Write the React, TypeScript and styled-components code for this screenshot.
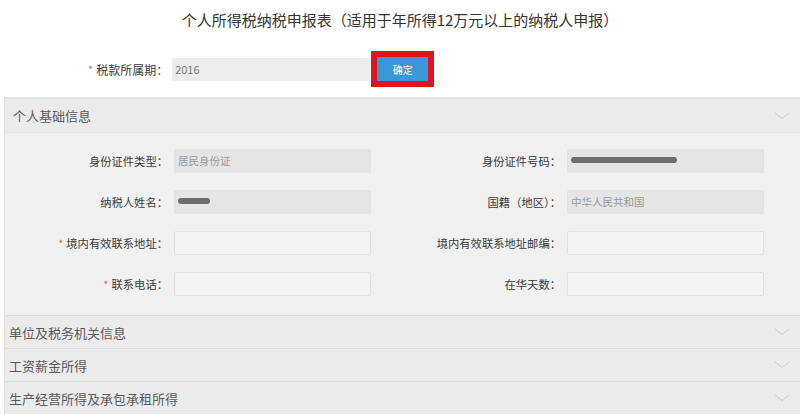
import React from 'react';
import styled, { createGlobalStyle } from 'styled-components';

const GlobalStyle = createGlobalStyle`
  html, body {
    margin: 0;
    padding: 0;
    background: #fff;
  }
  body {
    font-family: "Noto Sans CJK SC", "Noto Sans", sans-serif;
    color: #333;
  }
`;

const Page = styled.div`
  width: 800px;
  height: 415px;
  overflow: hidden;
  background: #fff;
`;

const Title = styled.h1`
  margin: 0;
  padding-top: 10px;
  font-size: 15px;
  line-height: 20px;
  font-weight: 400;
  text-align: center;
  color: #333;
`;

const PeriodRow = styled.div`
  display: flex;
  align-items: center;
  margin-top: 21px;
  padding-left: 88px;
`;

const Star = styled.span`
  color: #e2685f;
  font-size: 11px;
  margin-right: 3px;
`;

const PeriodLabel = styled.span`
  font-size: 12px;
  color: #3a3a3a;
  margin-right: 4px;
`;

const PeriodInput = styled.div`
  width: 198px;
  height: 23px;
  background: #ececec;
  color: #777;
  font-size: 11px;
  line-height: 23px;
  padding-left: 3px;
  box-sizing: border-box;
`;

const Highlight = styled.div`
  border: 6px solid #e0141e;
  margin-left: 1px;
`;

const ConfirmButton = styled.button`
  display: block;
  width: 51px;
  height: 24px;
  border: none;
  padding: 0;
  background: #3a97d8;
  color: #fff;
  font-family: inherit;
  font-size: 10px;
`;

const Panel = styled.div`
  margin-top: 10px;
  margin-left: 4px;
  border-top: 2px solid #e1e1e1;
  border-left: 1px solid #e2e2e2;
`;

const SectionHeader = styled.div<{ $first?: boolean }>`
  display: flex;
  align-items: center;
  justify-content: space-between;
  height: ${(p) => (p.$first ? 33 : 32)}px;
  padding-left: ${(p) => (p.$first ? 8 : 4)}px;
  padding-right: 10px;
  background: #ebebeb;
  border-top: ${(p) => (p.$first ? 'none' : '1px solid #dcdcdc')};
  border-bottom: ${(p) => (p.$first ? '1px solid #e3e3e3' : 'none')};
  font-size: 13px;
  color: #5a5a5a;
`;

const Chevron = styled.svg`
  width: 16px;
  height: 8px;
`;

const SectionBody = styled.div`
  display: grid;
  grid-template-columns: repeat(2, 393px);
  row-gap: 17px;
  padding: 16px 0 19px;
  background: #f1f1f1;
`;

const Field = styled.div`
  display: flex;
  align-items: center;
  height: 24px;
`;

const FieldLabel = styled.div`
  width: 163px;
  text-align: right;
  font-size: 11.3px;
  color: #3a3a3a;
  margin-right: 6px;
  white-space: nowrap;
`;

const FieldInput = styled.div<{ $disabled?: boolean }>`
  position: relative;
  width: 197px;
  height: 24px;
  box-sizing: border-box;
  border: 1px solid ${(p) => (p.$disabled ? '#e3e3e3' : '#e2e2e2')};
  background: ${(p) => (p.$disabled ? '#e5e5e5' : '#f4f4f4')};
  color: #9a9a9a;
  font-size: 10.5px;
  line-height: 22px;
  padding-left: 3px;
  border-radius: 2px;
`;

const Redacted = styled.span<{ $w: number }>`
  position: absolute;
  left: 3px;
  top: 7px;
  width: ${(p) => p.$w}px;
  height: 6px;
  border-radius: 3px;
  background: #6d6d6d;
  filter: blur(0.6px);
`;

const Chev = () => (
  <Chevron viewBox="0 0 16 8">
    <polyline points="1,1 8,6.5 15,1" fill="none" stroke="#c9c9c9" strokeWidth="1" />
  </Chevron>
);

type FieldDef = {
  label: string;
  required?: boolean;
  value?: string;
  disabled?: boolean;
  redact?: number;
};

const fields: FieldDef[] = [
  { label: '身份证件类型：', value: '居民身份证', disabled: true },
  { label: '身份证件号码：', disabled: true, redact: 106 },
  { label: '纳税人姓名：', disabled: true, redact: 32 },
  { label: '国籍（地区）：', value: '中华人民共和国', disabled: true },
  { label: '境内有效联系地址：', required: true },
  { label: '境内有效联系地址邮编：' },
  { label: '联系电话：', required: true },
  { label: '在华天数：' },
];

const collapsed = ['单位及税务机关信息', '工资薪金所得', '生产经营所得及承包承租所得'];

export default function App() {
  return (
    <Page>
      <GlobalStyle />
      <Title>个人所得税纳税申报表（适用于年所得12万元以上的纳税人申报）</Title>
      <PeriodRow>
        <Star>*</Star>
        <PeriodLabel>税款所属期：</PeriodLabel>
        <PeriodInput>2016</PeriodInput>
        <Highlight>
          <ConfirmButton>确定</ConfirmButton>
        </Highlight>
      </PeriodRow>
      <Panel>
        <SectionHeader $first>
          个人基础信息
          <Chev />
        </SectionHeader>
        <SectionBody>
          {fields.map((f) => (
            <Field key={f.label}>
              <FieldLabel>
                {f.required && <Star>*</Star>}
                {f.label}
              </FieldLabel>
              <FieldInput $disabled={f.disabled}>
                {f.value}
                {f.redact && <Redacted $w={f.redact} />}
              </FieldInput>
            </Field>
          ))}
        </SectionBody>
        {collapsed.map((t) => (
          <SectionHeader key={t}>
            {t}
            <Chev />
          </SectionHeader>
        ))}
      </Panel>
    </Page>
  );
}
